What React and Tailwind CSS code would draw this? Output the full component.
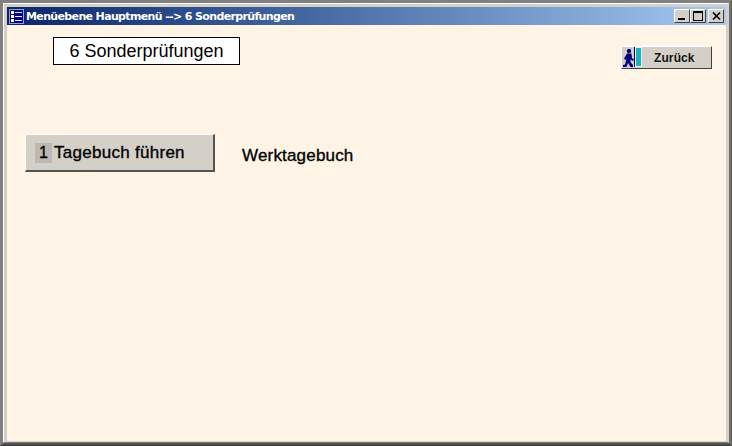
export default function App() {
  const sans = { fontFamily: '"Liberation Sans", Arial, sans-serif' };
  return (
    <div className="w-[732px] h-[446px] overflow-hidden bg-[#d4d0c8] border-t-[1px] border-l-[1px] border-r-[1px] border-b-[1px] border-t-[#808080] border-l-[#808080] border-r-[#606060] border-b-[#404040]" style={sans}>
      <div className="h-full border-t-[2px] border-l-[2px] border-r-[2px] border-b-[2px] border-t-[#808080] border-l-[#808080] border-r-[#707070] border-b-[#505050]">
        <div className="h-full border-t border-l border-r border-b border-t-[#ffffff] border-l-[#ffffff] border-r-[#d4d0c8] border-b-[#808080] pt-[3px] pl-[3px] pr-[2px] pb-[1px] flex flex-col">
          <div className="h-[18px] shrink-0 flex items-center bg-gradient-to-r from-[#0a246a] to-[#a6caf0] pl-[2px] pr-[2px]">
            <svg width="16" height="15" viewBox="0 0 16 15" className="shrink-0">
              <rect x="0.5" y="0.5" width="14" height="14" fill="#000080" stroke="#8f9fe0" />
              <rect x="2" y="2" width="3" height="3" fill="#ffffff" />
              <rect x="2" y="6" width="3" height="3" fill="#ffffff" />
              <rect x="2" y="10" width="3" height="3" fill="#ffffff" />
              <rect x="6" y="3" width="7" height="1" fill="#e0e8ff" />
              <rect x="6" y="7" width="7" height="1" fill="#e0e8ff" />
              <rect x="6" y="11" width="7" height="1" fill="#e0e8ff" />
            </svg>
            <span className="ml-[1px] text-[11px] leading-none font-bold text-white whitespace-nowrap" style={{ fontFamily: '"DejaVu Sans", Verdana, sans-serif', letterSpacing: '-0.64px' }}>Menüebene Hauptmenü --&gt; 6 Sonderprüfungen</span>
            <div className="ml-auto flex items-center">
              <WinBtn><div className="w-[7px] h-[2px] bg-black mt-[6px] mr-[2px]" /></WinBtn>
              <WinBtn><div className="w-[10px] h-[10px] border border-black border-t-2" /></WinBtn>
              <div className="w-[2px]" />
              <WinBtn>
                <svg width="9" height="8" viewBox="0 0 9 8"><path d="M1 0.5 L8 7.5 M8 0.5 L1 7.5" stroke="#000" strokeWidth="1.6" fill="none" /></svg>
              </WinBtn>
            </div>
          </div>
          <div className="flex-1 bg-[#fff4e6] pt-[12px] pl-[46px] pr-[14px]">
            <div className="flex items-start justify-between">
              <div className="w-[187px] h-[28px] bg-white border border-black flex items-center justify-center text-[18px] leading-none text-black">6 Sonderprüfungen</div>
              <div className="mt-[9px] w-[91px] h-[23px] flex items-center bg-[#d4d0c8] border-r border-b border-r-[#404040] border-b-[#404040] border-t border-l border-t-[#ffffff] border-l-[#ffffff]">
                <svg width="22" height="21" viewBox="0 0 22 21" className="shrink-0">
                  <rect x="13" y="0" width="7" height="20" fill="#e8f8f8" />
                  <rect x="14" y="1" width="5" height="18" fill="#20b0b8" />
                  <rect x="12" y="0" width="1" height="20" fill="#000060" />
                  <circle cx="7" cy="4" r="2.2" fill="#000080" />
                  <path d="M5 6.5 L9.5 6.5 L10 11 L12 12.5 L11 14 L8.5 12.5 L8.5 15 L11 18 L11 20 L8.5 20 L6 16 L4.5 20 L1 20 L1 18 L3 17.5 L4.5 12 L3.5 13 L2 11.5 Z" fill="#000080" />
                </svg>
                <span className="ml-[10px] text-[12px] leading-none font-bold text-[#111]" style={{ letterSpacing: '0.1px' }}>Zurück</span>
              </div>
            </div>
            <div className="mt-[65px] -ml-[28px] flex items-start">
              <div className="w-[190px] h-[38px] flex items-center pl-[9px] bg-[#d4d0c8] border-t border-l border-t-[#ffffff] border-l-[#ffffff] border-r-2 border-b-2 border-r-[#555555] border-b-[#555555] text-[17px] leading-none text-black [-webkit-text-stroke:0.35px_#000]">
                <span className="w-[17px] h-[20px] bg-[#bdb9b2] flex items-center justify-center mr-[2px] text-[16px]">1</span>
                <span className="whitespace-nowrap" style={{ letterSpacing: '0.28px' }}>Tagebuch führen</span>
              </div>
              <span className="ml-[27px] mt-[13px] text-[17px] leading-[18px] text-black [-webkit-text-stroke:0.35px_#000] whitespace-nowrap" style={{ letterSpacing: '0.18px' }}>Werktagebuch</span>
            </div>
          </div>
        </div>
      </div>
    </div>
  );
}

function WinBtn({ children }) {
  return (
    <div className="w-[16px] h-[14px] flex items-center justify-center bg-[#d4d0c8] border-t border-l border-t-white border-l-white border-r border-b border-r-[#404040] border-b-[#404040]">
      {children}
    </div>
  );
}
